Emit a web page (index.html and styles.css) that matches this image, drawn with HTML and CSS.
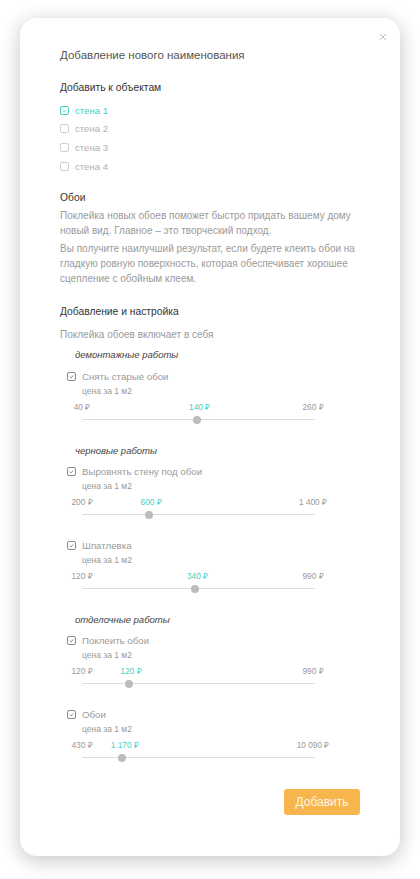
FILE: index.html
```html
<!DOCTYPE html>
<html lang="ru">
<head>
<meta charset="utf-8">
<title>Добавление нового наименования</title>
<link rel="stylesheet" href="styles.css">
</head>
<body>
<div class="card">
  <button class="close" aria-label="Закрыть">
    <svg width="8" height="8" viewBox="0 0 8 8"><path d="M1 1L7 7M7 1L1 7" stroke="#bdbdbd" stroke-width="1"/></svg>
  </button>
  <h1 class="title">Добавление нового наименования</h1>

  <h2 class="section">Добавить к объектам</h2>
  <ul class="objects">
    <li class="obj obj-on"><span class="box box-on"><svg viewBox="0 0 10 10"><path d="M3 5.2L4.4 6.6L7 3.8" fill="none" stroke="#45cfc1" stroke-width="1"/></svg></span>стена 1</li>
    <li class="obj"><span class="box"></span>стена 2</li>
    <li class="obj"><span class="box"></span>стена 3</li>
    <li class="obj"><span class="box"></span>стена 4</li>
  </ul>

  <h2 class="section sec-wall">Обои</h2>
  <p class="para">Поклейка новых обоев поможет быстро придать вашему дому новый вид. Главное – это творческий подход.</p>
  <p class="para para2">Вы получите наилучший результат, если будете клеить обои на гладкую ровную поверхность, которая обеспечивает хорошее сцепление с обойным клеем.</p>

  <h2 class="section sec-setup">Добавление и настройка</h2>
  <p class="para intro">Поклейка обоев включает в себя</p>

  <div class="group group-first">демонтажные работы</div>
  <div class="item item-first">
    <div class="item-head"><span class="box box-item"><svg viewBox="0 0 10 10"><path d="M3 5.2L4.4 6.6L7 3.8" fill="none" stroke="#777" stroke-width="1"/></svg></span>Снять старые обои</div>
    <div class="note">цена за 1 м2</div>
    <div class="prices">
      <span class="p p-min">40 ₽</span>
      <span class="p p-cur" style="left: calc(49.4% + 2.5px)">140 ₽</span>
      <span class="p p-max">260 ₽</span>
    </div>
    <div class="track"><span class="thumb" style="left: 49.4%"></span></div>
  </div>

  <div class="group">черновые работы</div>
  <div class="item item-first">
    <div class="item-head"><span class="box box-item"><svg viewBox="0 0 10 10"><path d="M3 5.2L4.4 6.6L7 3.8" fill="none" stroke="#777" stroke-width="1"/></svg></span>Выровнять стену под обои</div>
    <div class="note">цена за 1 м2</div>
    <div class="prices">
      <span class="p p-min">200 ₽</span>
      <span class="p p-cur" style="left: calc(28.6% + 2.5px)">600 ₽</span>
      <span class="p p-max">1 400 ₽</span>
    </div>
    <div class="track"><span class="thumb" style="left: 28.6%"></span></div>
  </div>
  <div class="item">
    <div class="item-head"><span class="box box-item"><svg viewBox="0 0 10 10"><path d="M3 5.2L4.4 6.6L7 3.8" fill="none" stroke="#777" stroke-width="1"/></svg></span>Шпатлевка</div>
    <div class="note">цена за 1 м2</div>
    <div class="prices">
      <span class="p p-min">120 ₽</span>
      <span class="p p-cur" style="left: calc(48.5% + 2.5px)">340 ₽</span>
      <span class="p p-max">990 ₽</span>
    </div>
    <div class="track"><span class="thumb" style="left: 48.5%"></span></div>
  </div>

  <div class="group">отделочные работы</div>
  <div class="item item-first">
    <div class="item-head"><span class="box box-item"><svg viewBox="0 0 10 10"><path d="M3 5.2L4.4 6.6L7 3.8" fill="none" stroke="#777" stroke-width="1"/></svg></span>Поклеить обои</div>
    <div class="note">цена за 1 м2</div>
    <div class="prices">
      <span class="p p-min">120 ₽</span>
      <span class="p p-cur" style="left: calc(20% + 2.5px)">120 ₽</span>
      <span class="p p-max">990 ₽</span>
    </div>
    <div class="track"><span class="thumb" style="left: 20%"></span></div>
  </div>
  <div class="item">
    <div class="item-head"><span class="box box-item"><svg viewBox="0 0 10 10"><path d="M3 5.2L4.4 6.6L7 3.8" fill="none" stroke="#777" stroke-width="1"/></svg></span>Обои</div>
    <div class="note">цена за 1 м2</div>
    <div class="prices">
      <span class="p p-min">430 ₽</span>
      <span class="p p-cur" style="left: calc(17.3% + 2.5px)">1 170 ₽</span>
      <span class="p p-max">10 090 ₽</span>
    </div>
    <div class="track"><span class="thumb" style="left: 17.3%"></span></div>
  </div>

  <div class="actions">
    <button class="add">Добавить</button>
  </div>
</div>
</body>
</html>
```

FILE: styles.css
```css
* { box-sizing: border-box; }
html, body { margin: 0; padding: 0; background: #ffffff; }
body {
  font-family: "Liberation Sans", Arial, Helvetica, sans-serif;
  color: #999;
  padding: 18px 20px 23px 20px;
}
.card {
  position: relative;
  width: 380px;
  height: 838px;
  background: #fff;
  border-radius: 17px;
  box-shadow: 0 4px 20px rgba(0, 0, 0, 0.24);
  padding: 29px 40px 0 40px;
}
.close {
  position: absolute;
  top: 15px;
  right: 13px;
  width: 8px;
  height: 8px;
  padding: 0;
  border: 0;
  background: none;
  display: block;
}
.close svg { display: block; }
.title {
  margin: 0;
  font-size: 11.5px;
  line-height: 16px;
  font-weight: normal;
  color: #555;
}
.section {
  margin: 18px 0 0 0;
  font-size: 10.3px;
  line-height: 14px;
  font-weight: normal;
  color: #333;
}
.objects {
  list-style: none;
  margin: 6px 0 0 0;
  padding: 0;
}
.obj {
  display: flex;
  align-items: center;
  height: 18.67px;
  font-size: 9.6px;
  color: #b0b0b0;
}
.obj-on { color: #45cfc1; }
.box {
  width: 9px;
  height: 9px;
  border: 1px solid #cfcfcf;
  border-radius: 2px;
  margin-right: 6px;
  display: inline-flex;
  flex: none;
}
.box svg { width: 100%; height: 100%; display: block; transform: scale(1.25); }
.box-on { border-color: #45cfc1; }
.sec-wall { margin-top: 15.5px; }
.para {
  margin: 2.5px 0 0 0;
  font-size: 10px;
  line-height: 15px;
  color: #9a9a9a;
}
.para2 { margin-top: 3px; }
.sec-setup { margin-top: 19.5px; }
.intro { margin-top: 7.5px; }
.group {
  margin: 18px 0 0 15px;
  font-size: 9.5px;
  line-height: 15px;
  font-style: italic;
  color: #444;
}
.group-first { margin-top: 5px; }
.item { margin: 18px 0 0 7px; }
.item-first { margin-top: 6px; }
.group-first + .item-first { margin-top: 7px; }
.item-head {
  display: flex;
  align-items: center;
  height: 15px;
  font-size: 9.7px;
  color: #9a9a9a;
}
.box-item { border-color: #8a8a8a; margin-right: 6px; }
.note {
  margin-left: 15px;
  height: 15px;
  line-height: 15px;
  font-size: 8.5px;
  color: #999;
}
.prices {
  position: relative;
  margin-left: 15px;
  width: 233px;
  height: 16px;
  font-size: 8.3px;
  line-height: 16px;
  color: #999;
}
.p { position: absolute; top: 0; white-space: nowrap; transform: translateX(-50%); }
.p-min { left: 0; }
.p-max { left: calc(100% - 2px); }
.p-cur { color: #45cfc1; }
.track {
  position: relative;
  margin-left: 15px;
  width: 233px;
  height: 10px;
}
.track::before {
  content: "";
  position: absolute;
  left: 0;
  right: 0;
  top: 4.5px;
  height: 1px;
  background: #dcdcdc;
}
.thumb {
  position: absolute;
  top: 1px;
  width: 8px;
  height: 8px;
  margin-left: -4px;
  border-radius: 50%;
  background: #bdbdbd;
}
.actions {
  display: flex;
  justify-content: flex-end;
  margin-top: 26px;
}
.add {
  width: 76px;
  height: 26px;
  border: 0;
  border-radius: 3px;
  background: #f7b64d;
  color: rgba(255, 255, 255, 0.88);
  font-family: "Liberation Sans", Arial, sans-serif;
  font-size: 12px;
  padding: 0;
}
```
